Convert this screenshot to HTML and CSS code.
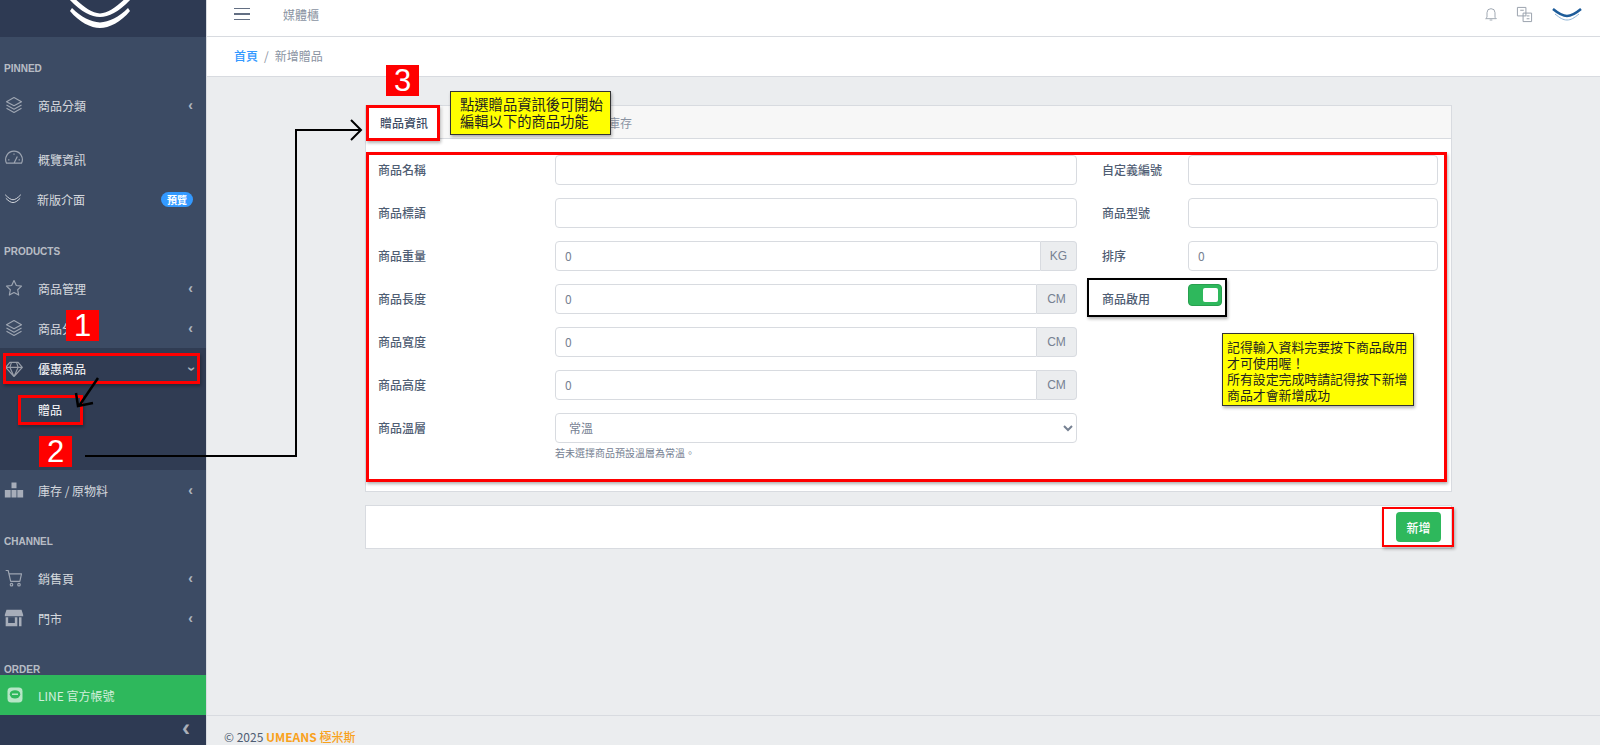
FILE: index.html
```html
<!DOCTYPE html>
<html lang="zh-Hant">
<head>
<meta charset="utf-8">
<title>新增贈品</title>
<link rel="stylesheet" href="styles.css">
</head>
<body>
<div class="app">
  <aside class="sidebar">
    <div class="brand">
      <svg class="brand-logo" viewBox="0 0 62 30" aria-hidden="true">
        <path d="M0 -1 C12 12 22 17 31 17 C40 17 50 12 62 -1 L58 -3 C48 6 40 13 31 13.500 C22 13 14 6 4 -3 Z" fill="#fff"/>
        <path d="M1 11 C10 22 22 28 31 28 C40 28 52 22 61 11 L59 8 C50 17 40 22 31 22.500 C22 22 12 17 3 8 Z" fill="#fff"/>
      </svg>
    </div>
    <nav class="nav">
      <div class="nav-title">PINNED</div>
      <a class="nav-item">
        <svg class="nav-icon" viewBox="0 0 24 24"><path d="M12 3 3 8l9 5 9-5zM3 12l9 5 9-5M3 16l9 5 9-5"/></svg>
        <span class="nav-label">商品分類</span><span class="chev">‹</span>
      </a>
      <div class="nav-gap"></div>
      <a class="nav-item">
        <svg class="nav-icon" viewBox="0 0 24 24"><path d="M3 17a10 10 0 1 1 18 0zM12 17l4-8M6.500 13H5M19 13h-1.500M12 7V5.500"/></svg>
        <span class="nav-label">概覽資訊</span>
      </a>
      <a class="nav-item">
        <svg class="nav-icon nav-icon-logo" viewBox="0 0 24 14"><path d="M1 1c5 5 8 7 11 7s6-2 11-7M2 6c4 4 7 6 10 6s6-2 10-6"/></svg>
        <span class="nav-label nav-label-tight">新版介面</span><span class="badge">預覽</span>
      </a>
      <div class="nav-title nav-title-wide">PRODUCTS</div>
      <a class="nav-item">
        <svg class="nav-icon" viewBox="0 0 24 24"><path d="m12 3 2.800 6 6.200.800-4.600 4.300 1.200 6.400L12 17.400l-5.600 3.100 1.200-6.400L3 9.800 9.200 9z"/></svg>
        <span class="nav-label">商品管理</span><span class="chev">‹</span>
      </a>
      <a class="nav-item">
        <svg class="nav-icon" viewBox="0 0 24 24"><path d="M12 3 3 8l9 5 9-5zM3 12l9 5 9-5M3 16l9 5 9-5"/></svg>
        <span class="nav-label">商品分類</span><span class="chev">‹</span>
      </a>
      <div class="nav-group">
        <a class="nav-item nav-item-open nav-item-tall">
          <svg class="nav-icon" viewBox="0 0 24 24"><path d="M7 4h10l5 6-10 11L2 10zM2 10h20M9 4l-2 6 5 11 5-11-2-6"/></svg>
          <span class="nav-label">優惠商品</span><span class="chev chev-down">‹</span>
        </a>
        <a class="nav-item nav-sub nav-item-open"><span class="nav-label">贈品</span></a>
        <div class="nav-item nav-sub nav-item-tall"></div>
      </div>
      <a class="nav-item">
        <svg class="nav-icon nav-icon-solid" viewBox="0 0 24 24"><path d="M9 3h6v7H9zM1 12h7v9H1zM9 12h6v9H9zM16 12h7v9h-7z"/></svg>
        <span class="nav-label">庫存 / 原物料</span><span class="chev">‹</span>
      </a>
      <div class="nav-title nav-title-spaced">CHANNEL</div>
      <a class="nav-item">
        <svg class="nav-icon" viewBox="0 0 24 24"><path d="M2 3h3l3 13h11l2-9H6"/><circle cx="9" cy="20" r="1.500"/><circle cx="18" cy="20" r="1.500"/></svg>
        <span class="nav-label">銷售頁</span><span class="chev">‹</span>
      </a>
      <a class="nav-item">
        <svg class="nav-icon nav-icon-solid" viewBox="0 0 24 24"><path d="M3 2h18l2 6v2H1V8zM2 11h14v11H2zM18 11h3v11h-3z"/><path class="store-door" d="M5 11h8v7H5z"/></svg>
        <span class="nav-label">門市</span><span class="chev">‹</span>
      </a>
      <div class="nav-title nav-title-spaced">ORDER</div>
    </nav>
    <a class="line-link">
      <svg class="line-icon" viewBox="0 0 24 24"><rect x="2" y="2" width="20" height="20" rx="5"/><ellipse class="line-bubble" cx="12" cy="11" rx="7" ry="5.500"/><path class="line-bar" d="M8 11h8"/></svg>
      <span>LINE 官方帳號</span>
    </a>
    <div class="sidebar-toggle"><span class="toggle-chev">‹</span></div>
  </aside>

  <div class="main">
    <header class="topbar">
      <div class="hamburger"><i></i><i></i><i></i></div>
      <span class="topbar-link">媒體櫃</span>
      <div class="topbar-right">
        <svg class="top-icon top-icon-bell" viewBox="0 0 24 24"><path d="M6 17V10a6 6 0 0 1 12 0v7l2 2H4zM10 21h4"/></svg>
        <svg class="top-icon" viewBox="0 0 24 24"><path d="M2 2h12v12H2zM10 10h12v12H10z"/><path d="M6 6h5M15 14h4M15 18h4"/></svg>
        <svg class="top-logo" viewBox="0 0 30 14"><path d="M1 2c6 5 10 7 14 7s8-2 14-7"/><path class="top-logo-thin" d="M3 7c5 4 8 6 12 6s7-2 12-6"/></svg>
      </div>
    </header>
    <div class="crumbs">
      <a class="crumb-link">首頁</a><span class="crumb-sep">/</span><span class="crumb-now">新增贈品</span>
    </div>
    <main class="content">
      <section class="card">
        <div class="tabs">
          <a class="tab tab-active">贈品資訊</a>
          <div class="tab-spacer"></div>
          <a class="tab">庫存</a>
        </div>
        <div class="form">
          <div class="form-col form-col-left">
            <div class="row"><label>商品名稱</label><input class="field" type="text"></div>
            <div class="row"><label>商品標語</label><input class="field" type="text"></div>
            <div class="row"><label>商品重量</label><div class="group"><input class="field" type="text" value="0"><span class="addon addon-kg">KG</span></div></div>
            <div class="row"><label>商品長度</label><div class="group"><input class="field" type="text" value="0"><span class="addon">CM</span></div></div>
            <div class="row"><label>商品寬度</label><div class="group"><input class="field" type="text" value="0"><span class="addon">CM</span></div></div>
            <div class="row"><label>商品高度</label><div class="group"><input class="field" type="text" value="0"><span class="addon">CM</span></div></div>
            <div class="row row-last"><label>商品溫層</label><select class="field"><option>常溫</option></select></div>
            <p class="hint">若未選擇商品預設溫層為常溫。</p>
          </div>
          <div class="form-col form-col-right">
            <div class="row"><label>自定義編號</label><input class="field" type="text"></div>
            <div class="row"><label>商品型號</label><input class="field" type="text"></div>
            <div class="row"><label>排序</label><input class="field" type="text" value="0"></div>
            <div class="row"><label>商品啟用</label><span class="switch"><i></i></span></div>
          </div>
        </div>
      </section>
      <section class="card card-actions">
        <button class="btn" type="button">新增</button>
      </section>
    </main>
    <footer class="footer">© 2025 <b>UMEANS</b> <span class="footer-cjk">極米斯</span></footer>
  </div>
</div>

<div class="notes">
  <div class="box box-nav"></div>
  <div class="box box-gift"></div>
  <div class="box box-tab"></div>
  <div class="box box-form"></div>
  <div class="box box-btn"></div>
  <div class="box box-switch"></div>
  <div class="num num-1">1</div>
  <div class="num num-2">2</div>
  <div class="num num-3">3</div>
  <div class="tip tip-tab">點選贈品資訊後可開始<br>編輯以下的商品功能</div>
  <div class="tip tip-save">記得輸入資料完要按下商品啟用<br>才可使用喔！<br>所有設定完成時請記得按下新增<br>商品才會新增成功</div>
  <svg class="arrows" viewBox="0 0 1600 745">
    <path class="arrow-thick" d="M98 378 79 406M76 393l2 13 15-3"/>
    <path d="M85 456H296V130H361M351 120l10 10-10 10"/>
  </svg>
</div>
</body>
</html>
```
FILE: styles.css
```css
* { box-sizing: border-box; }
html, body { margin: 0; height: 100%; overflow: hidden; }
body {
  font-family: "Noto Sans CJK TC", "Noto Sans", sans-serif;
  font-size: 12px;
  color: #4f5d73;
  background: #ebedef;
}
.app { display: flex; height: 745px; }

/* sidebar */
.sidebar {
  width: 207px;
  flex: none;
  display: flex;
  flex-direction: column;
  background: #3c4b64;
  color: rgba(255, 255, 255, .8);
  border-right: 1px solid #d8dbe0;
}
.brand {
  height: 37px;
  flex: none;
  background: #2e3a53;
  display: flex;
  justify-content: center;
  overflow: hidden;
}
.brand-logo { width: 62px; height: 30px; margin-left: -6px; }
.nav { flex: 1; overflow: hidden; padding-top: 20px; min-height: 0; }
.nav-title {
  height: 20px;
  margin-bottom: 8px;
  padding: 1.500px 0 0 4px;
  font: bold 10px/20px "Liberation Sans", sans-serif;
  color: rgba(255, 255, 255, .65);
}
.nav-title-spaced { margin-top: 20px; }
.nav-title-wide { margin-top: 21px; }
.nav-gap { height: 14px; }
.nav-item {
  height: 40px;
  display: flex;
  align-items: center;
  padding: 0 13px 0 4px;
}
.nav-item-tall { height: 41px; }
.nav-icon {
  width: 20px;
  height: 20px;
  flex: none;
  margin-right: 14px;
  fill: none;
  stroke: rgba(255, 255, 255, .5);
  stroke-width: 1.400;
  stroke-linejoin: round;
}
.nav-icon-logo { stroke: rgba(255, 255, 255, .75); width: 18px; height: 10px; margin-right: 16px; }
.nav-icon-solid { fill: rgba(255, 255, 255, .55); stroke: none; }
.store-door { fill: #3c4b64; }
.nav-label { flex: 1; white-space: nowrap; }
.nav-label-tight { margin-left: -1px; }
.chev { font: bold 14px/14px "Liberation Sans", sans-serif; color: rgba(255, 255, 255, .6); }
.chev-down { transform: rotate(-90deg); }
.badge {
  background: #39f;
  color: #fff;
  border-radius: 8px;
  font-size: 10px;
  font-weight: 700;
  line-height: 15px;
  width: 32px;
  text-align: center;
}
.nav-group { background: #303c53; }
.nav-item-open { color: #fff; }
.nav-sub { padding-left: 38px; }
.line-link {
  height: 40px;
  flex: none;
  display: flex;
  align-items: center;
  padding-left: 6px;
  background: #2eb85c;
  color: rgba(255, 255, 255, .8);
}
.line-icon { width: 18px; height: 18px; margin-right: 14px; fill: rgba(255, 255, 255, .65); }
.line-bubble { fill: #2eb85c; }
.line-bar { stroke: rgba(255, 255, 255, .65); stroke-width: 2; }
.sidebar-toggle {
  height: 30px;
  flex: none;
  background: #2e3a53;
  display: flex;
  justify-content: flex-end;
  align-items: center;
  padding-right: 16px;
}
.toggle-chev { font: bold 24px/24px "Liberation Sans", sans-serif; color: rgba(255, 255, 255, .6); margin-top: -5px; }

/* main */
.main { flex: 1; min-width: 0; display: flex; flex-direction: column; }
.topbar {
  height: 37px;
  flex: none;
  display: flex;
  align-items: center;
  background: #fff;
  border-bottom: 1px solid #d8dbe0;
  padding: 0 18px 8px 27px;
}
.hamburger { width: 16px; display: flex; flex-direction: column; gap: 4px; margin-right: 33px; }
.hamburger i { display: block; height: 1.500px; background: #636f83; }
.topbar-link { color: #8a93a2; }
.topbar-right { margin-left: auto; display: flex; align-items: center; gap: 19px; }
.top-icon { width: 17px; height: 17px; fill: none; stroke: #9aa2ad; stroke-width: 1.400; }
.top-icon-bell { width: 16px; height: 16px; margin-right: -2px; }
.top-logo { width: 30px; height: 14px; fill: none; stroke: #1d5c9a; stroke-width: 2.500; }
.top-logo-thin { stroke: #8db4d6; stroke-width: 1; }
.crumbs {
  height: 40px;
  flex: none;
  display: flex;
  align-items: center;
  gap: 6px;
  padding: 0 0 2px 27px;
  background: #fff;
  border-bottom: 1px solid #d8dbe0;
}
.crumb-link { color: #39f; font-weight: 500; }
.crumb-sep, .crumb-now { color: #8a93a2; }
.content { flex: 1; padding: 28px 148px 0 158px; }
.card { background: #fff; border: 1px solid #d8dbe0; }
.tabs { display: flex; height: 33px; background: #f7f7f7; border-bottom: 1px solid #d8dbe0; }
.tab { flex: none; padding: 8px 14px 0; line-height: 18px; color: #8a93a2; white-space: nowrap; }
.tab-active { width: 76px; background: #fff; color: #3c4b64; font-weight: 500; }
.tab-spacer { width: 152px; flex: none; }
.form { display: flex; gap: 25px; padding: 16px 13px 0 12px; height: 352px; }
.form-col-left { width: 699px; flex: none; }
.form-col-right { flex: 1; }
.row { display: flex; align-items: center; height: 30px; margin-bottom: 13px; }
.row-last { margin-bottom: 0; }
.row label { flex: none; width: 177px; padding-bottom: 2px; font-weight: 500; color: #4f5d73; }
.form-col-right .row label { width: 86px; }
.field {
  flex: 1;
  min-width: 0;
  width: 100%;
  height: 30px;
  border: 1px solid #d8dbe0;
  border-radius: 4px;
  background: #fff;
  padding: 0 9px 2px;
  font: inherit;
  color: #768192;
}
.group { flex: 1; display: flex; min-width: 0; }
.group .field { border-radius: 4px 0 0 4px; }
.addon {
  width: 40px;
  flex: none;
  display: flex;
  align-items: center;
  justify-content: center;
  border: 1px solid #d8dbe0;
  border-left: 0;
  border-radius: 0 4px 4px 0;
  background: #ebedef;
  color: #768192;
  font: 12px "Liberation Sans", sans-serif;
}
.addon-kg { width: 36px; }
.hint { margin: 2px 0 0 177px; font-size: 10px; line-height: 15px; color: #768192; }
.switch {
  width: 34px;
  height: 22px;
  margin-top: -8px;
  background: #2eb85c;
  border: 1px solid #28a04f;
  border-radius: 4px;
  display: flex;
  align-items: center;
  justify-content: flex-end;
  padding-right: 3px;
}
.switch i { width: 15px; height: 14px; background: #fff; border-radius: 2px; }
.card-actions { margin-top: 13px; height: 44px; display: flex; align-items: center; justify-content: flex-end; padding-right: 10px; }
.btn {
  width: 45px;
  height: 30px;
  border: 0;
  border-radius: 4px;
  background: #2eb85c;
  color: #fff;
  font: 500 12px "Noto Sans CJK TC", sans-serif;
}
.footer {
  height: 30px;
  flex: none;
  border-top: 1px solid #d8dbe0;
  padding: 12px 0 0 17px;
  font-size: 12px;
  line-height: 17px;
  color: #4f5d73;
  overflow: hidden;
}
.footer b { color: #f9a11b; font-weight: 700; }
.footer-cjk { color: #f9a11b; font-weight: 500; }

/* screenshot annotations lying over the page */
.notes { position: absolute; inset: 0; pointer-events: none; }
.box { position: absolute; border: 3px solid #f00; box-shadow: 1px 2px 3px rgba(0, 0, 0, .3); }
.box-nav { left: 3px; top: 353px; width: 197px; height: 31px; }
.box-gift { left: 18px; top: 395px; width: 65px; height: 30px; }
.box-tab { left: 366px; top: 105px; width: 74px; height: 36px; }
.box-form { left: 366px; top: 152px; width: 1081px; height: 330px; }
.box-btn { left: 1382px; top: 507px; width: 72px; height: 40px; border-width: 2px; }
.box-switch { left: 1087px; top: 278px; width: 140px; height: 39px; border: 2px solid #000; }
.num {
  position: absolute;
  width: 33px;
  height: 31px;
  background: #f00;
  color: #fff;
  font: 31px/31px "Liberation Sans", sans-serif;
  text-align: center;
}
.num-1 { left: 66px; top: 310px; }
.num-2 { left: 39px; top: 436px; }
.num-3 { left: 386px; top: 65px; }
.tip {
  position: absolute;
  background: #ff0;
  color: #222;
  border: 1px solid #333;
  box-shadow: 1px 2px 3px rgba(0, 0, 0, .3);
  white-space: nowrap;
}
.tip-tab { left: 450px; top: 91px; width: 161px; height: 44px; padding: 4px 0 0 9px; font-size: 14.300px; line-height: 16.500px; }
.tip-save { left: 1222px; top: 333px; width: 192px; height: 73px; padding: 5px 0 0 4px; font-size: 12.900px; line-height: 16px; }
.arrows { position: absolute; left: 0; top: 0; width: 1600px; height: 745px; fill: none; stroke: #000; stroke-width: 2; }
.arrow-thick { stroke-width: 2.500; }
```
